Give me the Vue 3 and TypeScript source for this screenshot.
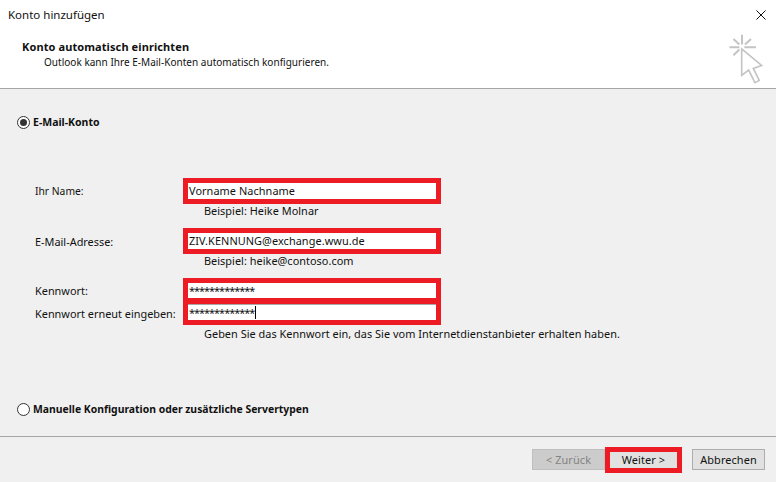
<script setup lang="ts">
const hint3 = "Geben Sie das Kennwort ein, das Sie vom Internetdienstanbieter erhalten haben.";
</script>

<template>
  <div class="dialog">
    <div class="titlebar">
      <span>Konto hinzufügen</span>
      <svg class="close" width="10" height="10" viewBox="0 0 10 10"><path d="M0.5 0.5L9.5 9.5M9.5 0.5L0.5 9.5" stroke="#111" fill="none" /></svg>
    </div>
    <div class="header">
      <div class="head-text">
        <div class="head-title">Konto automatisch einrichten</div>
        <div class="head-sub">Outlook kann Ihre E-Mail-Konten automatisch konfigurieren.</div>
      </div>
      <svg class="wizard" width="40" height="53" viewBox="150 100 120 160">
        <g stroke="#c4c4c4" stroke-width="6" fill="none">
          <path d="M160 143H190M205 143H240M198 105V135M172 118L190 135M225 118L207 135M172 167L190 150" />
          <path d="M197 148L257 198L232 207L250 243L237 250L218 212L197 228Z" stroke-width="5" fill="#fff" />
        </g>
      </svg>
    </div>
    <div class="body">
      <label class="radio-row first">
        <span class="radio on"></span>
        <span>E-Mail-Konto</span>
      </label>
      <div class="form">
        <div class="row">
          <span class="label name-label">Ihr Name:</span>
          <div class="redbox"><div class="field">Vorname Nachname</div></div>
        </div>
        <div class="hint">Beispiel: Heike Molnar</div>
        <div class="row row-2">
          <span class="label">E-Mail-Adresse:</span>
          <div class="redbox"><div class="field">ZIV.KENNUNG@exchange.wwu.de</div></div>
        </div>
        <div class="hint">Beispiel: heike@contoso.com</div>
        <div class="row row-2">
          <div class="pw-labels">
            <span class="label">Kennwort:</span>
            <span class="label">Kennwort erneut eingeben:</span>
          </div>
          <div class="redbox pw-box">
            <div class="field pw">*************</div>
            <div class="field pw second">*************<span class="caret"></span></div>
          </div>
        </div>
        <div class="hint hint-pw">{{ hint3 }}</div>
      </div>
      <label class="radio-row last">
        <span class="radio"></span>
        <span>Manuelle Konfiguration oder zusätzliche Servertypen</span>
      </label>
    </div>
    <div class="footer">
      <button class="btn disabled">&lt; Zurück</button>
      <button class="btn next">Weiter &gt;</button>
      <button class="btn cancel">Abbrechen</button>
    </div>
  </div>
</template>

<style>
html, body { margin: 0; background: #f0f0f0; }
</style>

<style scoped>
.dialog {
  width: 776px;
  height: 482px;
  display: flex;
  flex-direction: column;
  overflow: hidden;
  background: #f0f0f0;
  color: #111;
  font-family: "Noto Sans", "Open Sans", sans-serif;
  font-size: 10.9px;
}
.titlebar {
  height: 30px;
  box-sizing: border-box;
  padding: 0 10px 2px 8px;
  background: #fff;
  display: flex;
  align-items: center;
  justify-content: space-between;
  font-size: 11.5px;
}
.close { margin-top: 1px; }
.header {
  height: 58px;
  background: #fff;
  border-bottom: 1px solid #a6a6a6;
  display: flex;
  justify-content: space-between;
  padding: 0 10px 0 22px;
}
.head-text { padding-top: 9px; }
.head-title { font-weight: 700; line-height: 16px; font-size: 11px; letter-spacing: 0.1px; }
.head-sub { margin-left: 22px; line-height: 15px; font-size: 10px; letter-spacing: 0.02px; }
.wizard { margin-top: 3px; }
.body {
  height: 347px;
  display: flex;
  flex-direction: column;
  border-bottom: 1px solid #a6a6a6;
  box-sizing: content-box;
}
.radio-row {
  display: flex;
  align-items: center;
  gap: 3px;
  margin-left: 17px;
  font-weight: 700;
  height: 14px;
  font-size: 10.4px;
}
.radio-row.first { margin-top: 26px; font-size: 10.5px; }
.radio-row.last { margin-top: auto; margin-bottom: 20px; }
.radio {
  width: 13px;
  height: 13px;
  border: 1px solid #333;
  border-radius: 50%;
  background: #fff;
  box-sizing: border-box;
  position: relative;
}
.radio.on::after {
  content: "";
  position: absolute;
  inset: 2px;
  border-radius: 50%;
  background: #333;
}
.form { margin: 49px 0 0 35px; }
.row {
  display: grid;
  grid-template-columns: 148px 258px;
  align-items: center;
}
.row-2 { margin-top: 10px; }
.redbox {
  border: 5px solid #ed1c24;
  background: #ed1c24;
}
.field {
  height: 16px;
  background: #fff;
  line-height: 16px;
  padding-left: 1px;
  color: #111;
  letter-spacing: 0.07px;
}
.pw { height: 15px; line-height: 15px; letter-spacing: -0.98px; }
.pw.second {
  height: 16px;
  margin-top: 6px;
  border-top: 1px solid #a8a8a8;
  box-sizing: border-box;
  display: flex;
  align-items: center;
}
.caret {
  width: 1px;
  height: 13px;
  margin-left: 1px;
  background: #000;
}
.pw-labels {
  display: flex;
  flex-direction: column;
  gap: 8px;
}
.label { line-height: 15px; }
.name-label { font-size: 10.3px; }
.hint {
  margin-left: 169px;
  line-height: 14px;
  letter-spacing: 0.03px;
}
.hint-pw { padding-top: 2px; }
.footer {
  flex: 1;
  position: relative;
  display: flex;
  justify-content: flex-end;
  align-items: center;
  padding: 0 11px 0 0;
}
.btn {
  width: 73px;
  height: 21px;
  box-sizing: border-box;
  border: 1px solid #adadad;
  background: #e1e1e1;
  color: #111;
  font: inherit;
  letter-spacing: 0.1px;
  padding: 0;
}
.btn.disabled {
  background: #cccccc;
  border-color: #bfbfbf;
  color: #838383;
}
.btn.next {
  width: 77px;
  height: 26px;
  border: 5px solid #ed1c24;
}
.btn.cancel { margin-left: 10px; }
</style>
